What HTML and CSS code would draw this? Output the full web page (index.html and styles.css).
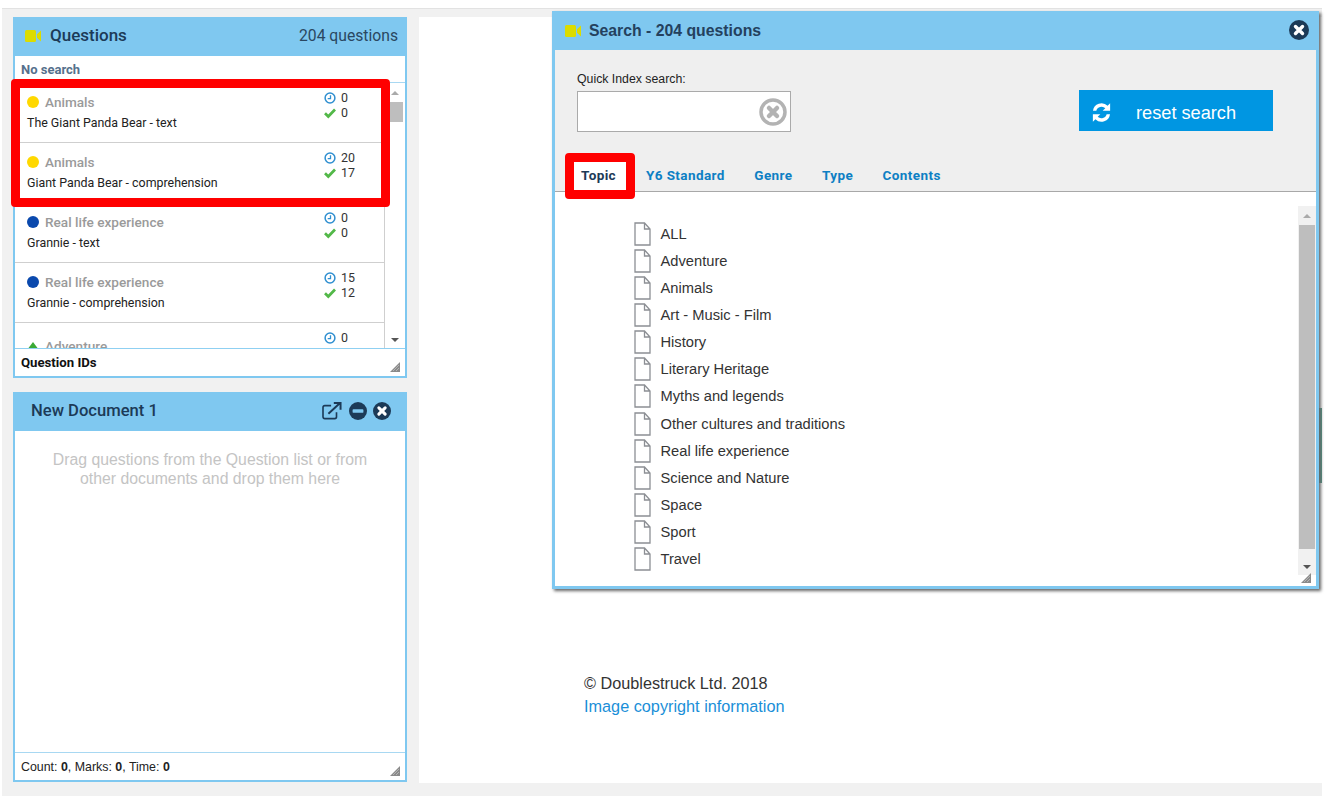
FILE: index.html
```html
<!DOCTYPE html>
<html lang="en">
<head>
<meta charset="utf-8">
<title>Questions</title>
<link rel="stylesheet" href="styles.css">
</head>
<body>
<svg class="defs" width="0" height="0">
  <symbol id="cam" viewBox="0 0 16 12"><path d="M0 1.5Q0 0 1.500 0H9.500Q11 0 11 1.500V10.500Q11 12 9.500 12H1.500Q0 12 0 10.500Z"/><path d="M12 4.300L16 .5V11.500L12 7.700Z"/></symbol>
  <symbol id="clock" viewBox="0 0 12 12"><circle cx="6" cy="6" r="4.900" fill="none" stroke="#2f8fd0" stroke-width="1.500"/><path d="M6.500 3.200V6.700H3.700" fill="none" stroke="#2f8fd0" stroke-width="1.300"/></symbol>
  <symbol id="check" viewBox="0 0 12 10"><path d="M1 5.200L4.300 8.500L11 1.500" fill="none" stroke="#52b848" stroke-width="2.700"/></symbol>
  <symbol id="close" viewBox="0 0 20 20"><circle cx="10" cy="10" r="10"/><path d="M6.500 6.500L13.500 13.500M13.500 6.500L6.500 13.500" stroke="#fff" stroke-width="3.400" stroke-linecap="round"/></symbol>
  <symbol id="grip" viewBox="0 0 10 10"><path d="M10 0V10H0Z" fill="#8a8a8a"/><path d="M9 3L3 9M9 6L6 9" stroke="#d0d0d0" stroke-width=".6"/></symbol>
  <symbol id="file" viewBox="0 0 17 24"><path d="M1 1H10.500L16 7V23H1Z M10.500 1V7H16" fill="#fff" stroke="#8c8f94" stroke-width="1.300"/></symbol>
</svg>

<div class="frame">
  <aside class="side">
    <section class="panel qpanel">
      <header class="phead">
        <svg class="cam"><use href="#cam"/></svg>
        <h2 class="ptitle">Questions</h2>
        <span class="pcount">204 questions</span>
      </header>
      <div class="nosearch">No search</div>
      <div class="listwrap">
        <ul class="qlist">
          <li class="qrow">
            <div class="qmain"><div class="qtopic"><i class="dot yellow"></i>Animals</div><div class="qname">The Giant Panda Bear - text</div></div>
            <div class="qstats"><div class="stat"><svg class="ico"><use href="#clock"/></svg>0</div><div class="stat"><svg class="ico"><use href="#check"/></svg>0</div></div>
          </li>
          <li class="qrow">
            <div class="qmain"><div class="qtopic"><i class="dot yellow"></i>Animals</div><div class="qname">Giant Panda Bear - comprehension</div></div>
            <div class="qstats"><div class="stat"><svg class="ico"><use href="#clock"/></svg>20</div><div class="stat"><svg class="ico"><use href="#check"/></svg>17</div></div>
          </li>
          <li class="qrow">
            <div class="qmain"><div class="qtopic"><i class="dot blue"></i>Real life experience</div><div class="qname">Grannie - text</div></div>
            <div class="qstats"><div class="stat"><svg class="ico"><use href="#clock"/></svg>0</div><div class="stat"><svg class="ico"><use href="#check"/></svg>0</div></div>
          </li>
          <li class="qrow">
            <div class="qmain"><div class="qtopic"><i class="dot blue"></i>Real life experience</div><div class="qname">Grannie - comprehension</div></div>
            <div class="qstats"><div class="stat"><svg class="ico"><use href="#clock"/></svg>15</div><div class="stat"><svg class="ico"><use href="#check"/></svg>12</div></div>
          </li>
          <li class="qrow lastrow">
            <div class="qmain"><div class="qtopic"><i class="tri"></i>Adventure</div></div>
            <div class="qstats"><div class="stat"><svg class="ico"><use href="#clock"/></svg>0</div><div class="stat"><svg class="ico"><use href="#check"/></svg>0</div></div>
          </li>
        </ul>
        <div class="sbar sbar-q">
          <i class="arrow up"></i>
          <div class="thumb thumb-q"></div>
          <i class="arrow down"></i>
        </div>
      </div>
      <footer class="pfoot"><b class="qids">Question IDs</b><svg class="grip"><use href="#grip"/></svg></footer>
    </section>

    <section class="panel dpanel">
      <header class="phead dhead">
        <h2 class="ptitle dtitle">New Document 1</h2>
        <svg class="hicon ext" viewBox="0 0 22 20"><path d="M16 11.500V16.500Q16 18.500 14 18.500H3Q1 18.500 1 16.500V6Q1 4 3 4H10" fill="none" stroke="#1c3a57" stroke-width="1.800"/><path d="M7 13L19 2M13 1H20.500V8.500" fill="none" stroke="#1c3a57" stroke-width="2.200"/></svg>
        <svg class="hicon" viewBox="0 0 20 20"><circle cx="10" cy="10" r="10" fill="#1c3a57"/><rect x="4" y="8" width="12" height="4" rx="1" fill="#7fc8f0"/></svg>
        <svg class="hicon closei"><use href="#close"/></svg>
      </header>
      <div class="dbody">Drag questions from the Question list or from other documents and drop them here</div>
      <footer class="pfoot dfoot"><span>Count: <b>0</b>, Marks: <b>0</b>, Time: <b>0</b></span><svg class="grip"><use href="#grip"/></svg></footer>
    </section>
  </aside>

  <main class="content">
    <p class="copy">© Doublestruck Ltd. 2018</p>
    <a class="copylink" href="#">Image copyright information</a>
  </main>
</div>

<div class="peek"></div>

<section class="dialog">
  <header class="dlghead">
    <svg class="cam"><use href="#cam"/></svg>
    <h2 class="dlgtitle">Search - 204 questions</h2>
    <svg class="hicon dlgclose"><use href="#close"/></svg>
  </header>
  <div class="dlgtop">
    <div class="searchrow">
      <div class="quick">
        <label class="qlabel" for="qi">Quick Index search:</label>
        <div class="qinput">
          <input id="qi" class="qfield" type="text">
          <svg class="clear" viewBox="0 0 28 28"><circle cx="14" cy="14" r="12" fill="#fff" stroke="#b3b3b3" stroke-width="3.500"/><path d="M10 10L18 18M18 10L10 18" stroke="#b3b3b3" stroke-width="4.500" stroke-linecap="round"/></svg>
        </div>
      </div>
      <a class="reset" href="#">
        <svg class="reseti" viewBox="0 0 20 20"><path d="M2.600 8.500A7.500 7.500 0 0 1 15.300 4.200L17.500 2V8.500H11L13.300 6.300A4.700 4.700 0 0 0 5.500 8.500Z M17.400 11.500A7.500 7.500 0 0 1 4.700 15.800L2.500 18V11.500H9L6.700 13.700A4.700 4.700 0 0 0 14.500 11.500Z" fill="#fff"/></svg>
        <span class="resetlabel">reset search</span>
      </a>
    </div>
    <nav class="tabs">
      <a class="tab active" href="#">Topic</a>
      <a class="tab" href="#">Y6 Standard</a>
      <a class="tab" href="#">Genre</a>
      <a class="tab" href="#">Type</a>
      <a class="tab" href="#">Contents</a>
    </nav>
  </div>
  <div class="dlgbody">
    <ul class="topics">
      <li class="topic"><svg class="fileic"><use href="#file"/></svg>ALL</li>
      <li class="topic"><svg class="fileic"><use href="#file"/></svg>Adventure</li>
      <li class="topic"><svg class="fileic"><use href="#file"/></svg>Animals</li>
      <li class="topic"><svg class="fileic"><use href="#file"/></svg>Art - Music - Film</li>
      <li class="topic"><svg class="fileic"><use href="#file"/></svg>History</li>
      <li class="topic"><svg class="fileic"><use href="#file"/></svg>Literary Heritage</li>
      <li class="topic"><svg class="fileic"><use href="#file"/></svg>Myths and legends</li>
      <li class="topic"><svg class="fileic"><use href="#file"/></svg>Other cultures and traditions</li>
      <li class="topic"><svg class="fileic"><use href="#file"/></svg>Real life experience</li>
      <li class="topic"><svg class="fileic"><use href="#file"/></svg>Science and Nature</li>
      <li class="topic"><svg class="fileic"><use href="#file"/></svg>Space</li>
      <li class="topic"><svg class="fileic"><use href="#file"/></svg>Sport</li>
      <li class="topic"><svg class="fileic"><use href="#file"/></svg>Travel</li>
    </ul>
    <div class="sbar sbar-d">
      <i class="arrow up"></i>
      <div class="thumb thumb-d"></div>
      <i class="arrow down"></i>
    </div>
    <svg class="grip dgrip"><use href="#grip"/></svg>
  </div>
</section>

<div class="mark mark-rows"></div>
<div class="mark mark-tab"></div>
</body>
</html>
```

FILE: styles.css
```css
* { box-sizing: border-box; }
html, body { margin: 0; padding: 0; }
body {
  width: 1332px;
  height: 799px;
  background: #fff;
  position: relative;
  overflow: hidden;
  font-family: "Liberation Sans", Arial, sans-serif;
  color: #222;
}
.defs { position: absolute; }
h2, p, ul { margin: 0; padding: 0; }
ul { list-style: none; }
a { text-decoration: none; }

.frame {
  display: flex;
  width: 1320px;
  height: 788px;
  margin: 8px 0 0 2px;
  padding: 8px 0 13px 0;
  background: #f1f1f1;
  border-top: 1px solid #e2e2e2;
}
.side {
  width: 417px;
  flex: none;
  padding: 0 12px 0 11px;
  display: flex;
  flex-direction: column;
  gap: 14px;
}
.content {
  flex: 1;
  background: #fff;
  padding: 655px 0 0 165px;
  font-size: 16.250px;
  line-height: 23px;
}
.copy { color: #333; }
.copylink { color: #1a8fd8; }
.peek {
  position: absolute;
  left: 1319px;
  top: 408px;
  width: 3px;
  height: 75px;
  background: #4a8f7f;
}

.panel {
  border: 2px solid #7fc8f0;
  border-top: 0;
  background: #fff;
  display: flex;
  flex-direction: column;
}
.qpanel { height: 361px; }
.dpanel { height: 390px; }
.phead {
  height: 39px;
  flex: none;
  margin: 0 -2px;
  padding: 0 9px 2px 12px;
  background: #7fc8f0;
  display: flex;
  align-items: center;
  color: #1c3a57;
  font-family: Roboto, sans-serif;
}
.cam { width: 16px; height: 12px; fill: #dcdc00; flex: none; }
.ptitle { font-size: 17px; font-weight: 500; margin-left: 9px; line-height: 1; }
.pcount { margin-left: auto; font-size: 15.700px; color: #2a4761; }
.nosearch {
  height: 27px;
  flex: none;
  padding: 6px 6px 0;
  font: 700 13px/16px Roboto, sans-serif;
  color: #55708c;
  border-bottom: 1px solid #a8d8f2;
}
.listwrap { flex: 1; min-height: 0; position: relative; display: flex; overflow: hidden; }
.qlist { width: 370px; flex: none; border-right: 1px solid #cfcfcf; }
.qrow {
  height: 60px;
  display: flex;
  justify-content: space-between;
  padding: 9px 0 0 12px;
  border-bottom: 1px solid #cfcfcf;
  background: #fff;
  font-family: Roboto, sans-serif;
}
.qtopic {
  font-size: 13.600px;
  font-weight: 500;
  line-height: 20px;
  color: #9a9a9a;
  display: flex;
  align-items: center;
}
.dot { width: 12px; height: 12px; border-radius: 50%; margin-right: 6px; flex: none; }
.yellow { background: #ffd800; }
.blue { background: #0a49ad; }
.tri {
  width: 0;
  height: 0;
  margin-right: 6px;
  border: 6.500px solid transparent;
  border-top: 0;
  border-bottom: 8px solid #3aa935;
}
.qname { font-size: 12.400px; line-height: 20px; color: #222; margin-top: 1px; }
.qstats { width: 60px; flex: none; margin-top: -1px; }
.stat { font-size: 12.400px; line-height: 14.500px; color: #333; display: flex; align-items: center; }
.ico { width: 12px; height: 12px; margin-right: 5px; flex: none; }
.lastrow .qtopic { margin-top: 4px; }

.sbar {
  background: #f1f1f1;
  position: relative;
  display: flex;
  flex-direction: column;
  align-items: center;
}
.sbar-q { width: 20px; flex: none; background: #fff; }
.sbar-d { position: absolute; right: 0; top: 14px; width: 18px; height: 369px; }
.thumb { background: #bebebe; }
.thumb-q { width: 16px; height: 20px; margin-top: 7px; }
.thumb-d { width: 16px; height: 324px; margin-top: 7px; }
.arrow { width: 0; height: 0; border: 4px solid transparent; flex: none; }
.arrow.up { border-top: 0; border-bottom: 4px solid #aaa; margin-top: 8px; }
.arrow.down { border-bottom: 0; border-top: 4px solid #555; margin-top: auto; margin-bottom: 6px; }

.pfoot {
  height: 28px;
  flex: none;
  border-top: 1px solid #8fd0f2;
  padding: 0 5px 0 6px;
  display: flex;
  align-items: center;
  justify-content: space-between;
  font-size: 12.400px;
  color: #222;
  background: #fff;
}
.qids { font: 700 13.200px Roboto, sans-serif; color: #111; }
.grip { width: 10px; height: 10px; margin: 8px 0 0 0; }

.dhead { padding: 0 16px 2px 18px; }
.dtitle { margin: 2px auto 0 0; font-size: 16.600px; }
.hicon { width: 18px; height: 18px; flex: none; fill: #1c3a57; }
.ext { width: 20px; height: 18px; margin-right: 7px; }
.closei { margin-left: 6px; }
.dbody {
  flex: 1;
  padding: 19px 30px 0;
  text-align: center;
  font-size: 15.800px;
  line-height: 19px;
  color: #c4c4c4;
}
.dfoot { border-top-color: #a8d8f2; padding-top: 1px; }

.dialog {
  position: absolute;
  left: 552px;
  top: 11px;
  width: 767px;
  height: 578px;
  border: 3px solid #7fc8f0;
  border-top-width: 1px;
  background: #fff;
  box-shadow: 2px 2px 3px #666;
  display: flex;
  flex-direction: column;
}
.dlghead {
  height: 38px;
  flex: none;
  margin: 0 -3px;
  padding: 0 10px 0 13px;
  background: #7fc8f0;
  display: flex;
  align-items: center;
}
.dlgtitle { font-size: 15.800px; font-weight: 700; color: #24415e; margin-left: 8px; }
.dlgclose { margin: 0 0 2px auto; width: 20px; height: 20px; }
.dlgtop {
  height: 142px;
  flex: none;
  background: #efefef;
  border-bottom: 1px solid #a8a8a8;
  padding: 22px 0 0 22px;
  display: flex;
  flex-direction: column;
}
.searchrow { display: flex; align-items: flex-start; }
.quick { width: 502px; flex: none; }
.qlabel { display: block; font-size: 12.300px; line-height: 15px; color: #222; margin-bottom: 4px; }
.qinput {
  position: relative;
  width: 214px;
  height: 41px;
  border: 1px solid #aaa;
  background: #fff;
  display: flex;
  align-items: center;
  justify-content: flex-end;
  padding-right: 3px;
}
.qfield { flex: 1; min-width: 0; border: 0; background: transparent; outline: 0; }
.clear { width: 28px; height: 28px; flex: none; }
.reset {
  width: 194px;
  height: 41px;
  margin-top: 18px;
  padding: 4px 0 0 11px;
  background: #0096e2;
  color: #fff;
  display: flex;
  align-items: center;
  font-size: 18.200px;
}
.reseti { width: 23px; height: 23px; flex: none; margin-right: 23px; }
.resetlabel { margin-top: 1px; }
.tabs {
  display: flex;
  align-items: center;
  margin-top: 28px;
  font: 700 13.500px/16px Roboto, sans-serif;
  letter-spacing: .4px;
}
.tab { color: #0d7fc4; margin-right: 29.500px; }
.tab.active {
  color: #1c3a57;
  background: #fff;
  margin-left: -3px;
  margin-right: 20px;
  width: 52px;
  padding: 7px 0 7px 7px;
}
.dlgbody { flex: 1; position: relative; padding: 28px 0 0 79px; }
.topics { font-size: 14.700px; color: #333; }
.topic { height: 27.150px; display: flex; align-items: center; }
.fileic { width: 17px; height: 24px; margin-right: 9.500px; flex: none; }
.dgrip { position: absolute; right: 5px; bottom: 3px; margin: 0; }

.mark {
  position: absolute;
  border: 9px solid #ff0000;
  border-radius: 4px;
  pointer-events: none;
}
.mark-rows { left: 11px; top: 79px; width: 379px; height: 128px; }
.mark-tab { left: 565px; top: 153px; width: 70px; height: 46px; }
```
